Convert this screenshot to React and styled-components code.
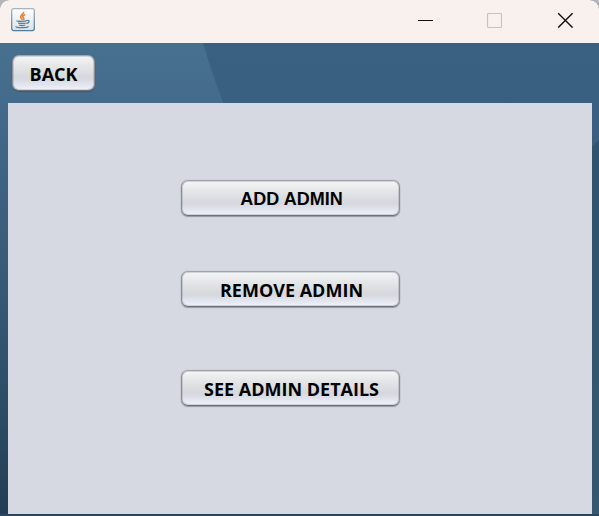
import React from "react";
import styled, { createGlobalStyle } from "styled-components";

const GlobalStyle = createGlobalStyle`
  * { box-sizing: border-box; }
  body { margin: 0; background: #b5b4b6; overflow: hidden; }
`;

const Window = styled.main`
  width: 599px;
  height: 516px;
  display: flex;
  flex-direction: column;
  overflow: hidden;
  border-radius: 9px 9px 0 0;
  background: #38597a;
`;

const TitleBar = styled.header`
  height: 43px;
  flex: none;
  display: flex;
  justify-content: space-between;
  background: #f9f1ee;
`;

const AppIcon = styled.svg`
  width: 24px;
  height: 24px;
  margin: 8px 0 0 11px;
`;

const WindowControls = styled.div`
  display: flex;
  gap: 53px;
  margin: 12px 26px 0 0;
`;

const ControlButton = styled.button`
  width: 16px;
  height: 16px;
  padding: 0;
  margin-right: ${({ disabled }) => (disabled ? 2 : 0)}px;
  border: 0;
  background: none;
  color: ${({ disabled }) => (disabled ? "#c8c2c0" : "#111")};
  svg { display: block; }
`;

const Desktop = styled.div`
  position: relative;
  flex: 1;
  display: flex;
  flex-direction: column;
  padding: 0 7px 2px 8px;
`;

const Backdrop = styled.svg`
  position: absolute;
  inset: 0;
`;

const NavBar = styled.nav`
  position: relative;
  height: 60px;
  flex: none;
  padding: 12px 0 0 4px;
`;

const Panel = styled.section`
  position: relative;
  flex: 1;
  display: flex;
  flex-direction: column;
  align-items: flex-start;
  padding: 77px 0 0 173px;
  background: #d6d9e1;
`;

const NimbusButton = styled.button`
  display: flex;
  align-items: center;
  justify-content: center;
  flex: none;
  width: ${({ $width }) => $width}px;
  height: 36px;
  margin: 0 0 ${({ $gap }) => $gap || 0}px;
  padding: 2px 0 0 ${({ $nudge }) => $nudge || 0}px;
  border: 1px solid;
  border-color: #a1a4a9 #8c8f95 #6e7176;
  border-radius: 7px;
  background: linear-gradient(#f6f7f8 0%, #e5e7e9 28%, #d6d8dd 62%, #d8dbe3 70%, #f1f4fc 100%) border-box;
  box-shadow:
    inset 0 0 0 1px rgba(120, 124, 131, 0.28),
    0 0 1px rgba(90, 94, 102, 0.55),
    0 1px 1px rgba(60, 64, 72, 0.4);
  color: #000;
  font: bold 18px/20px ${({ $face }) => $face || '"Open Sans"'}, sans-serif;
  white-space: nowrap;
`;

function JavaIcon() {
  return (
    <AppIcon viewBox="0 0 24 24" fill="none">
      <defs>
        <linearGradient id="tile" x2="0" y2="1">
          <stop stopColor="#fff" /><stop offset="1" stopColor="#dce2e8" />
        </linearGradient>
        <linearGradient id="rim" x2="0" y2="1">
          <stop stopColor="#a8b4bf" /><stop offset="1" stopColor="#537c9d" />
        </linearGradient>
      </defs>
      <rect x=".7" y=".7" width="22.6" height="21.9" rx="2" fill="url(#tile)" stroke="url(#rim)" strokeWidth="1.3" />
      <path d="M12.4 4c1 2-3.6 3-2.6 5.5.4 1 1.2 1.5 1.8 2.3M14 6.5c-2 1-3 2-1.6 3.2.8.8.5 1.5-.2 2.1" stroke="#ee842e" strokeWidth="1.7" />
      <path d="M5.8 12.6c-.6 1 8 .9 10.2.1M7.2 14.9c1.5.8 6 .8 7.6.1M8 17c1.7.7 4.7.6 6.2 0M15.6 12.6c3.6-1 3.2 2-.2 2.9M5 18.4c-.8 1.6 11.2 1.6 12.6-.1" stroke="#587d9d" strokeWidth="1.3" />
    </AppIcon>
  );
}

function WindowBackdrop() {
  return (
    <Backdrop width="599" height="473" aria-hidden="true">
      <defs>
        <linearGradient id="base" x2="0" y2="1">
          <stop stopColor="#3a6082" /><stop offset="1" stopColor="#36597a" />
        </linearGradient>
        <linearGradient id="left" x2="0" y2="1">
          <stop stopColor="#47708f" /><stop offset=".14" stopColor="#436a8b" />
          <stop offset=".65" stopColor="#31536e" /><stop offset="1" stopColor="#233e54" />
        </linearGradient>
        <linearGradient id="right" x2="0" y2="1">
          <stop stopColor="#2f526f" /><stop offset="1" stopColor="#36576e" />
        </linearGradient>
      </defs>
      <rect width="599" height="473" fill="url(#base)" />
      <path d="M0 0H203Q211 28 224 62L300 473H0Z" fill="url(#left)" />
      <path d="M599 97L585 111V473H599Z" fill="url(#right)" />
      <path d="M0 471H599V473H0Z" fill="#29475f" />
    </Backdrop>
  );
}

export default function App() {
  return (
    <>
      <GlobalStyle />
      <Window>
        <TitleBar>
          <JavaIcon />
          <WindowControls>
            <ControlButton aria-label="Minimize">
              <svg width="16" height="16"><path d="M1 8.5h15" stroke="currentColor" /></svg>
            </ControlButton>
            <ControlButton aria-label="Maximize" disabled>
              <svg width="16" height="16"><rect x="1.5" y="1.5" width="14" height="14" rx="1" fill="none" stroke="currentColor" strokeWidth="1.2" /></svg>
            </ControlButton>
            <ControlButton aria-label="Close">
              <svg width="16" height="16"><path d="M1.2 1.2l14.4 14.4M15.6 1.2L1.2 15.6" stroke="currentColor" strokeWidth="1.4" /></svg>
            </ControlButton>
          </WindowControls>
        </TitleBar>
        <Desktop>
          <WindowBackdrop />
          <NavBar>
            <NimbusButton $width={83}>BACK</NimbusButton>
          </NavBar>
          <Panel>
            <NimbusButton $width={219} $gap={55} $nudge={2} $face={'"Liberation Sans"'}>ADD ADMIN</NimbusButton>
            <NimbusButton $width={219} $gap={63} $nudge={2}>REMOVE ADMIN</NimbusButton>
            <NimbusButton $width={219} $nudge={2}>SEE ADMIN DETAILS</NimbusButton>
          </Panel>
        </Desktop>
      </Window>
    </>
  );
}
